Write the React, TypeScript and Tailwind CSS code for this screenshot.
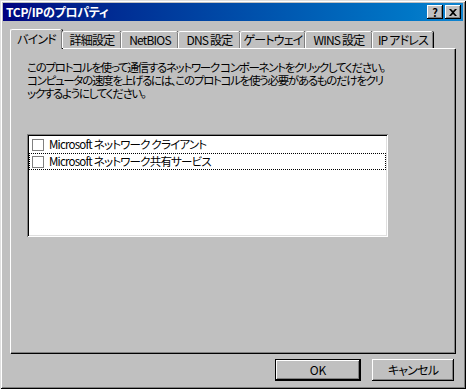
import React from 'react';

const font = { fontFamily: '"Noto Sans CJK JP", "Liberation Sans", sans-serif', fontFeatureSettings: '"palt"' };

const tabs = ['バインド', '詳細設定', 'NetBIOS', 'DNS 設定', 'ゲートウェイ', 'WINS 設定', 'IP アドレス'];
const widths = ['w-[52px]', 'w-[59px]', 'w-[57px]', 'w-[62px]', 'w-[65px]', 'w-[67px]', 'w-[61px]'];

function Check({ label, focused }: { label: string; focused?: boolean }) {
  return (
    <div className={`flex items-center h-[17px] pl-[3px] ${focused ? 'outline-1 outline-dotted outline-black -outline-offset-1' : ''}`}>
      <div className="w-[12px] h-[12px] border border-[#808080] bg-white" />
      <span className="ml-[5px] text-[11.5px] tracking-[-0.8px] leading-none text-black whitespace-nowrap">{label}</span>
    </div>
  );
}

export default function App() {
  return (
    <div style={font} className="w-[466px] h-[389px] bg-[#c0c0c0] flex flex-col p-[3px] shadow-[inset_1px_1px_0_#dfdfdf,inset_-1px_-1px_0_#000,inset_2px_2px_0_#fff,inset_-2px_-2px_0_#808080] select-none">
      {/* title bar */}
      <div className="h-[18px] flex items-center bg-gradient-to-r from-[#000080] to-[#1084d0] pl-[3px] pr-[2px]">
        <span className="text-white font-bold text-[12px] leading-none flex-1 tracking-[-0.3px]">TCP/IPのプロパティ</span>
        <button className="w-[16px] h-[14px] bg-[#c0c0c0] text-[11px] font-bold leading-none flex items-center justify-center shadow-[inset_-1px_-1px_0_#000,inset_1px_1px_0_#fff,inset_-2px_-2px_0_#808080]">?</button>
        <button className="w-[16px] h-[14px] ml-[2px] bg-[#c0c0c0] flex items-center justify-center shadow-[inset_-1px_-1px_0_#000,inset_1px_1px_0_#fff,inset_-2px_-2px_0_#808080]">
          <svg width="8" height="7" viewBox="0 0 8 7"><path d="M0 0h2l2 2 2-2h2L5 3.5 8 7H6L4 5 2 7H0l3-3.5z" fill="#000" /></svg>
        </button>
      </div>

      {/* tabs */}
      <div className="mt-[8px] ml-[7px] mr-[8px] flex flex-col">
        <div className="flex h-[19px] items-end relative z-10">
          {tabs.map((t, i) => (
            <div
              key={t}
              className={`${widths[i]} flex items-center justify-center text-[12px] tracking-[-0.8px] whitespace-nowrap leading-none text-black bg-[#c0c0c0] border-t border-l border-white rounded-tl-[2px] rounded-tr-[2px] shadow-[inset_-1px_0_0_#808080,1px_0_0_#000] ${i === 0 ? 'h-[20px] -mb-[1px] pb-[2px]' : 'h-[17px]'}`}
            >
              {t}
            </div>
          ))}
        </div>
        <div className="h-[305px] border-t border-l border-white shadow-[1px_1px_0_#000,inset_-1px_-1px_0_#808080] flex flex-col px-[16px] pt-[12px]">
          <p className="text-[11.5px] tracking-[-1.3px] leading-[13px] text-black whitespace-nowrap">
            このプロトコルを使って通信するネットワーク コンポーネントをクリックしてください。<br />
            コンピュータの速度を上げるには、このプロトコルを使う必要があるものだけをクリ<br />
            ックするようにしてください。
          </p>
          <div className="mt-[34px] w-[361px] h-[103px] bg-white shadow-[inset_1px_1px_0_#808080,inset_-1px_-1px_0_#fff,inset_2px_2px_0_#000,inset_-2px_-2px_0_#dfdfdf] p-[2px] flex flex-col">
            <Check label="Microsoft ネットワーク クライアント" />
            <Check label="Microsoft ネットワーク共有サービス" focused />
          </div>
        </div>
      </div>

      {/* buttons */}
      <div className="flex justify-end gap-[11px] mt-[6px] mr-[9px]">
        <button className="w-[86px] h-[22px] bg-[#c0c0c0] text-[12px] text-black border border-black shadow-[inset_-1px_-1px_0_#000,inset_1px_1px_0_#fff,inset_-2px_-2px_0_#808080]">OK</button>
        <button className="w-[82px] h-[22px] bg-[#c0c0c0] text-[12px] tracking-[-0.8px] text-black shadow-[inset_-1px_-1px_0_#000,inset_1px_1px_0_#fff,inset_-2px_-2px_0_#808080]">キャンセル</button>
      </div>
    </div>
  );
}
